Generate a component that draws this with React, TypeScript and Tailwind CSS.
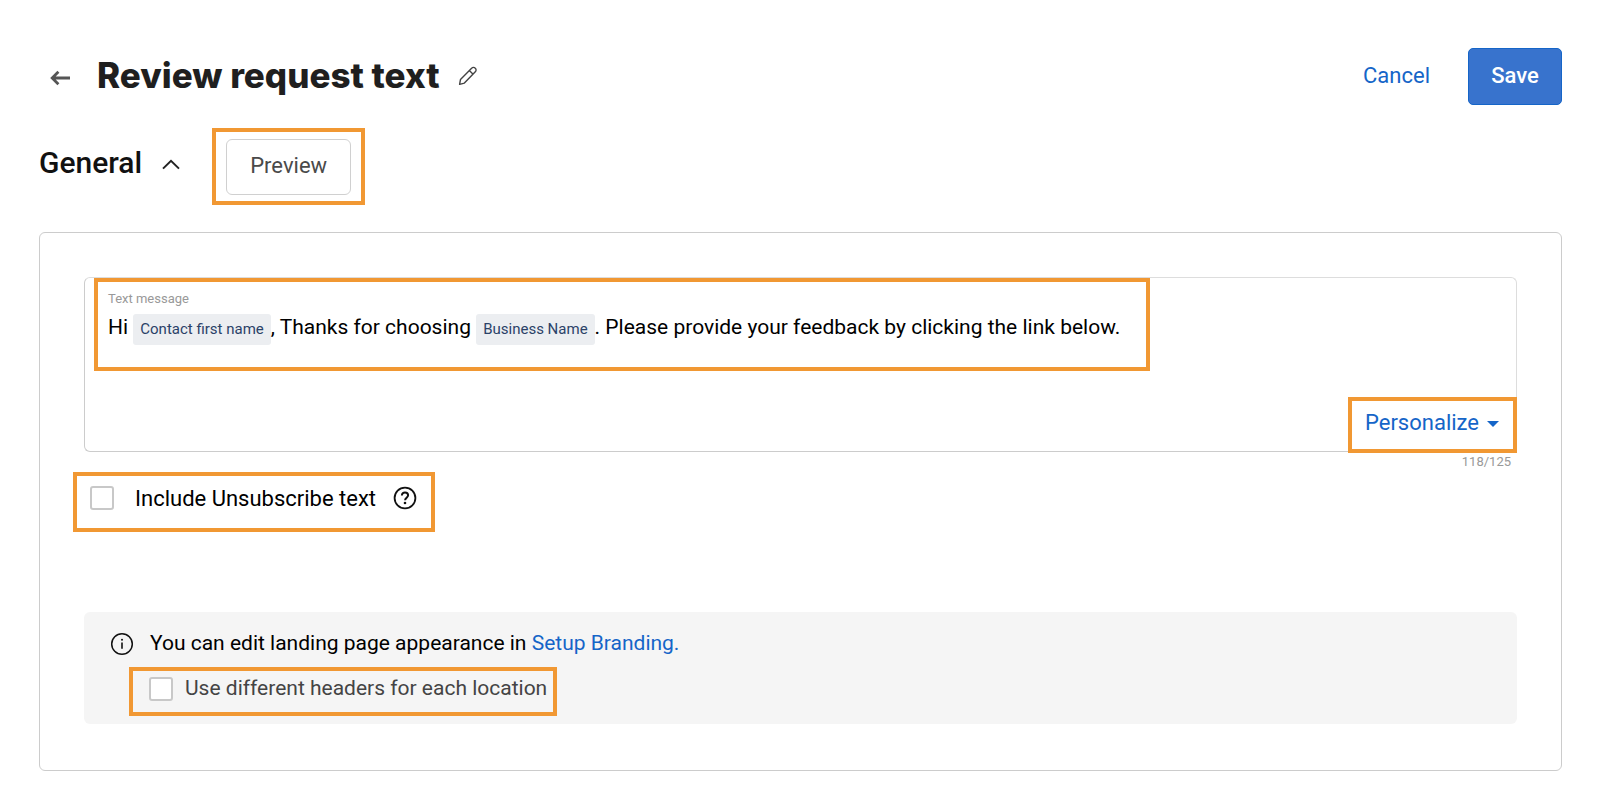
import React, { useState } from 'react';

const HighlightBox: React.FC<{
  className?: string;
  children: React.ReactNode;
}> = ({ className = '', children }) => (
  <div className={`border-4 border-[#f19833] ${className}`}>{children}</div>
);

const MergeTag: React.FC<{ label: string }> = ({ label }) => (
  <span
    contentEditable={false}
    className="inline-block rounded-[3px] bg-[#eceef1] px-[7px] text-[15px] leading-[31px] text-[#2b4268]"
  >
    {label}
  </span>
);

const CheckBox: React.FC<{
  id: string;
  checked: boolean;
  onChange: (checked: boolean) => void;
}> = ({ id, checked, onChange }) => (
  <input
    id={id}
    type="checkbox"
    checked={checked}
    onChange={(e) => onChange(e.target.checked)}
    className="size-6 shrink-0 appearance-none rounded-[3px] border-2 border-[#c8c8c8] bg-white checked:bg-[#3873cd]"
  />
);

const ArrowLeftIcon = () => (
  <svg width="20" height="16" viewBox="0 0 20 16" fill="none" stroke="#555" strokeWidth="2.8">
    <path d="M20 8H2M8.4 1.8L2.2 8l6.2 6.2" />
  </svg>
);

const PencilIcon = () => (
  <svg width="20" height="20" viewBox="0 0 20 20" fill="none" stroke="#444" strokeWidth="1.4" strokeLinejoin="round">
    <path d="M1.6 18.4l.9-5L13.6 2.2a2.5 2.5 0 0 1 3.7 0 2.5 2.5 0 0 1 0 3.6L6.4 17.1zM11.6 4.8l3 3" />
  </svg>
);

const ChevronUpIcon = () => (
  <svg width="18" height="11" viewBox="0 0 18 11" fill="none" stroke="#222" strokeWidth="2">
    <path d="M1 9.6L9 1.8l8 7.8" />
  </svg>
);

const HelpIcon = () => (
  <svg width="24" height="24" viewBox="0 0 24 24" fill="none" stroke="#111" strokeWidth="1.8">
    <circle cx="12" cy="12" r="10.4" />
    <path d="M8.9 9.6c0-1.9 1.3-3.1 3.1-3.1s3.1 1.1 3.1 2.8c0 2.3-3 2.5-3 4.9" strokeWidth="2" />
    <circle cx="12" cy="17" r="1.3" fill="#111" stroke="none" />
  </svg>
);

const InfoIcon = () => (
  <svg width="24" height="24" viewBox="0 0 24 24" fill="none" stroke="#111" strokeWidth="1.5">
    <circle cx="12" cy="12" r="10.3" />
    <path d="M12 10.6v6.2" strokeWidth="1.6" />
    <circle cx="12" cy="7.8" r="1" fill="#111" stroke="none" />
  </svg>
);

const App: React.FC = () => {
  const [unsubscribe, setUnsubscribe] = useState(false);
  const [differentHeaders, setDifferentHeaders] = useState(false);

  return (
    <div className="min-h-screen bg-white pt-12 pr-[38px] pb-9 pl-[39px] font-[Roboto,sans-serif] text-black">
      <header className="flex h-[57px] items-center">
        <button type="button" aria-label="Back" className="ml-[11px] pt-[2px]">
          <ArrowLeftIcon />
        </button>
        <h1 className="ml-[27px] pb-[3px] font-[Inter,sans-serif] text-[35px] leading-[44px] font-extrabold text-[#1f1f1f]">
          Review request text
        </h1>
        <button type="button" aria-label="Edit name" className="ml-[18px] pb-[2px]">
          <PencilIcon />
        </button>
        <button type="button" className="ml-auto pb-[2px] text-[22px] text-[#1565c8]">
          Cancel
        </button>
        <button
          type="button"
          className="ml-[38px] h-[57px] w-[94px] rounded-[5px] border border-[#1565c8] bg-[#3873cd] pb-[2px] text-[22px] font-medium text-white"
        >
          Save
        </button>
      </header>

      <div className="mt-[23px] flex items-baseline">
        <h2 className="text-[30px] font-medium text-[#111]">General</h2>
        <button type="button" aria-label="Collapse section" className="ml-5 self-center pb-1">
          <ChevronUpIcon />
        </button>
        <HighlightBox className="ml-8 px-[10px] pt-[7px] pb-[6px]">
          <button
            type="button"
            className="block h-14 w-[125px] rounded-[6px] border border-[#d0d0d0] pb-1 text-[22px] text-[#4a4a4a]"
          >
            Preview
          </button>
        </HighlightBox>
      </div>

      <main className="mt-[27px] rounded-[6px] border border-[#ccc] px-11 pt-11 pb-[46px]">
        <div className="relative min-h-[175px] rounded-[6px] border border-[#ccc] border-t-[#ddd] border-r-[#ddd]">
          <HighlightBox className="ml-[9px] h-[93px] w-[1056px] max-w-full px-[10px] pt-[7px]">
            <div id="message-label" className="pb-[3px] text-[13px] leading-5 text-[#999]">
              Text message
            </div>
            <div
              role="textbox"
              aria-labelledby="message-label"
              contentEditable
              suppressContentEditableWarning
              className="text-[21px] leading-[31px] outline-none"
            >
              Hi <MergeTag label="Contact first name" />, Thanks for choosing{' '}
              <MergeTag label="Business Name" />. Please provide your feedback by clicking the link below.
            </div>
          </HighlightBox>
          <HighlightBox className="absolute -right-px -bottom-[2px]">
            <button
              type="button"
              aria-haspopup="menu"
              className="flex h-12 items-center gap-2 pr-[14px] pb-[6px] pl-[13px] text-[22px] text-[#1565c8]"
            >
              Personalize
              <svg width="12" height="6" viewBox="0 0 12 6" fill="#1565c8" className="mt-1">
                <path d="M0 0h12L6 6z" />
              </svg>
            </button>
          </HighlightBox>
        </div>
        <div className="pr-[6px] text-right text-[13px] leading-5 text-[#999]">118/125</div>

        <HighlightBox className="-ml-[11px] flex h-[60px] w-fit items-start gap-[17px] pt-[10px] pr-[14px] pl-[13px]">
          <div className="flex h-6 items-center gap-[21px]">
            <CheckBox id="unsubscribe" checked={unsubscribe} onChange={setUnsubscribe} />
            <label htmlFor="unsubscribe" className="text-[22px]">
              Include Unsubscribe text
            </label>
          </div>
          <HelpIcon />
        </HighlightBox>

        <section className="mt-20 rounded-[6px] bg-[#f5f5f5] pt-[18px] pb-2">
          <div className="flex h-7 items-center gap-4 pl-[26px]">
            <InfoIcon />
            <p className="text-[21px]">
              You can edit landing page appearance in{' '}
              <a href="#branding" className="text-[#1565c8]">
                Setup Branding.
              </a>
            </p>
          </div>
          <HighlightBox className="mt-[9px] ml-[45px] flex h-[49px] w-fit items-start pt-[6px] pr-[6px] pl-4">
            <div className="flex h-6 items-center gap-3">
              <CheckBox id="headers" checked={differentHeaders} onChange={setDifferentHeaders} />
              <label htmlFor="headers" className="text-[21px] text-[#444]">
                Use different headers for each location
              </label>
            </div>
          </HighlightBox>
        </section>
      </main>
    </div>
  );
};

export default App;
